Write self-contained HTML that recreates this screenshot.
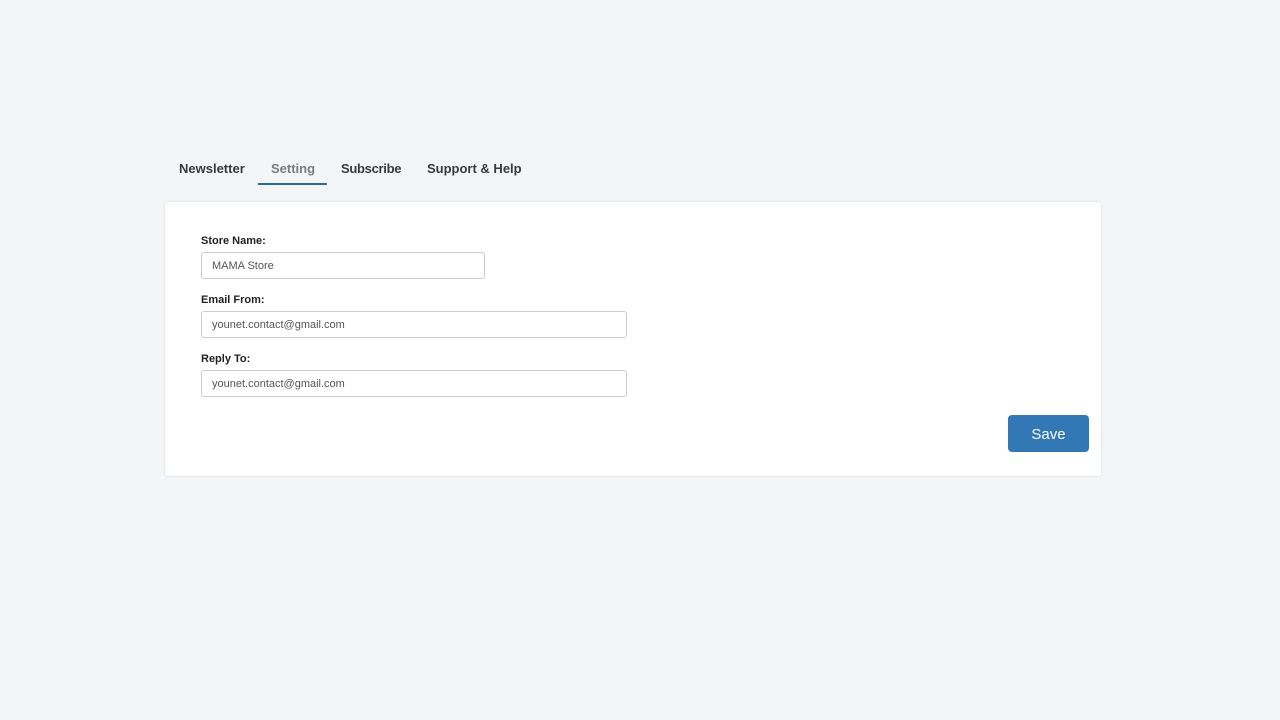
<!DOCTYPE html>
<html><head><style>
*{box-sizing:border-box;margin:0;padding:0}
body{width:1280px;height:720px;background:#f4f5f7;font-family:"Liberation Sans",sans-serif;position:relative;overflow:hidden}
.tab{position:absolute;top:161px;font-size:13px;font-weight:bold;color:#3a3a3a}
.card{position:absolute;left:165px;top:202px;width:936px;height:274px;background:#fff;border-radius:3px;box-shadow:0 0 2px rgba(0,0,0,.15)}
.lbl{position:absolute;left:36px;font-size:11px;font-weight:bold;color:#222}
.inp{position:absolute;left:36px;height:27px;border:1px solid #c9ccd0;border-radius:3px;font-size:11px;color:#555;padding:0 10px;line-height:27px}
.btn{position:absolute;left:843px;top:213px;width:81px;height:37px;background:#3278b5;border-radius:4px;color:#fff;font-size:15px;text-align:center;line-height:39px}
</style></head><body>
<div class="tab" style="left:179px">Newsletter</div>
<div class="tab" style="left:271px;color:#7a7d80">Setting</div>
<div style="position:absolute;left:258px;top:183px;width:69px;height:2px;background:#2a6f95"></div>
<div class="tab" style="left:341px;letter-spacing:-0.3px">Subscribe</div>
<div class="tab" style="left:427px">Support &amp; Help</div>
<div class="card">
<div class="lbl" style="top:33px">Store Name:</div>
<div class="inp" style="top:50px;width:284px">MAMA Store</div>
<div class="lbl" style="top:92px">Email From:</div>
<div class="inp" style="top:109px;width:426px">younet.contact@gmail.com</div>
<div class="lbl" style="top:151px">Reply To:</div>
<div class="inp" style="top:168px;width:426px">younet.contact@gmail.com</div>
<div class="btn">Save</div>
</div>
</body></html>
